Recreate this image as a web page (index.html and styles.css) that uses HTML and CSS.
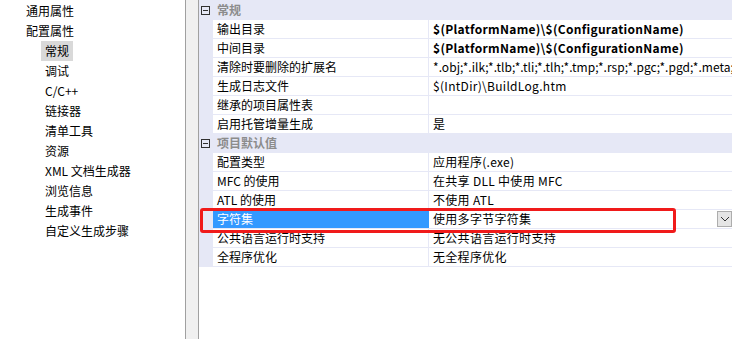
FILE: index.html
```html
<!DOCTYPE html>
<html lang="zh-CN">
<head>
<meta charset="utf-8">
<title>属性页</title>
<link rel="stylesheet" href="styles.css">
</head>
<body>
<div class="app">
  <nav class="tree">
    <div class="item lvl0"><span>通用属性</span></div>
    <div class="item lvl0"><span>配置属性</span></div>
    <div class="item lvl1 selected"><span>常规</span></div>
    <div class="item lvl1"><span>调试</span></div>
    <div class="item lvl1"><span>C/C++</span></div>
    <div class="item lvl1"><span>链接器</span></div>
    <div class="item lvl1"><span>清单工具</span></div>
    <div class="item lvl1"><span>资源</span></div>
    <div class="item lvl1"><span>XML 文档生成器</span></div>
    <div class="item lvl1"><span>浏览信息</span></div>
    <div class="item lvl1"><span>生成事件</span></div>
    <div class="item lvl1"><span>自定义生成步骤</span></div>
  </nav>
  <div class="splitter"></div>
  <div class="grid">
    <div class="cat"><span class="toggle"></span><span class="cat-label">常规</span></div>
    <div class="row"><span class="gutter"></span><span class="name">输出目录</span><span class="value bold">$(PlatformName)\$(ConfigurationName)</span></div>
    <div class="row"><span class="gutter"></span><span class="name">中间目录</span><span class="value bold">$(PlatformName)\$(ConfigurationName)</span></div>
    <div class="row"><span class="gutter"></span><span class="name">清除时要删除的扩展名</span><span class="value dense">*.obj;*.ilk;*.tlb;*.tli;*.tlh;*.tmp;*.rsp;*.pgc;*.pgd;*.meta;$(TargetPath)</span></div>
    <div class="row"><span class="gutter"></span><span class="name">生成日志文件</span><span class="value">$(IntDir)\BuildLog.htm</span></div>
    <div class="row"><span class="gutter"></span><span class="name">继承的项目属性表</span><span class="value"></span></div>
    <div class="row"><span class="gutter"></span><span class="name">启用托管增量生成</span><span class="value">是</span></div>
    <div class="cat"><span class="toggle"></span><span class="cat-label">项目默认值</span></div>
    <div class="row"><span class="gutter"></span><span class="name">配置类型</span><span class="value">应用程序(.exe)</span></div>
    <div class="row"><span class="gutter"></span><span class="name">MFC 的使用</span><span class="value">在共享 DLL 中使用 MFC</span></div>
    <div class="row"><span class="gutter"></span><span class="name">ATL 的使用</span><span class="value">不使用 ATL</span></div>
    <div class="row active"><span class="gutter"></span><span class="name">字符集</span><span class="value"><span class="value-text">使用多字节字符集</span><span class="dropdown"><svg width="10" height="6" viewBox="0 0 10 6"><path d="M1 1 L5 5 L9 1" fill="none" stroke="#333" stroke-width="1"/></svg></span></span></div>
    <div class="row"><span class="gutter"></span><span class="name">公共语言运行时支持</span><span class="value">无公共语言运行时支持</span></div>
    <div class="row"><span class="gutter"></span><span class="name">全程序优化</span><span class="value">无全程序优化</span></div>
  </div>
  <div class="mark"></div>
</div>
</body>
</html>
```

FILE: styles.css
```css
html, body {
  margin: 0;
  padding: 0;
  background: #ffffff;
}
body {
  width: 732px;
  height: 339px;
  overflow: hidden;
  font-family: "Noto Sans CJK SC", "Noto Sans", sans-serif;
  font-size: 12px;
  color: #000;
}
.app {
  position: relative;
  display: flex;
  height: 339px;
}
.tree {
  width: 185px;
  flex: none;
  padding-top: 1px;
  border-right: 1px solid #a0a0a0;
  background: #fff;
}
.item {
  height: 20px;
  line-height: 20px;
  white-space: nowrap;
}
.item span {
  display: inline-block;
  padding: 0 4px;
}
.lvl0 { padding-left: 22px; }
.lvl1 { padding-left: 41px; }
.item.selected span { background: #d9d9d9; }
.splitter {
  width: 12px;
  flex: none;
  background: #f0f0f0;
  border-right: 1px solid #a0a0a0;
}
.grid {
  flex: 1;
  min-width: 0;
  border-top: 1px solid #e6e8f6;
  overflow: hidden;
}
.cat {
  height: 18px;
  border-bottom: 1px solid #e6e8f6;
  background: #e6e8f6;
  display: flex;
  align-items: center;
}
.toggle {
  width: 7px;
  height: 7px;
  border: 1px solid #303030;
  margin-left: 2px;
  margin-right: 7px;
  position: relative;
  flex: none;
}
.toggle::after {
  content: "";
  position: absolute;
  left: 1px;
  right: 1px;
  top: 3px;
  height: 1px;
  background: #303030;
}
.cat-label {
  color: #8c8c8c;
  font-weight: bold;
  line-height: 18px;
}
.row {
  display: flex;
  height: 18px;
  border-bottom: 1px solid #e6e8f6;
  line-height: 18px;
  white-space: nowrap;
}
.gutter {
  width: 14px;
  flex: none;
  background: #e6e8f6;
}
.name {
  width: 211px;
  flex: none;
  padding-left: 4px;
  border-right: 1px solid #e6e8f6;
  overflow: hidden;
}
.value {
  flex: 1;
  min-width: 0;
  padding-left: 4px;
  overflow: hidden;
  display: flex;
  align-items: center;
  letter-spacing: 0.3px;
}
.value.dense { letter-spacing: 0.04px; }
.bold { font-weight: bold; }
.row.active .name {
  background: #3399ff;
  color: #fff;
  border-right-color: #3399ff;
}
.value-text { flex: none; }
.dropdown {
  margin-left: auto;
  width: 15px;
  height: 16px;
  box-sizing: border-box;
  border: 1px solid #adadad;
  background: #e5e5e5;
  display: flex;
  align-items: center;
  justify-content: center;
  flex: none;
}
.mark {
  position: absolute;
  left: 200px;
  top: 208px;
  width: 470px;
  height: 19px;
  border: 3px solid #f01a1a;
  border-radius: 3px;
}
```
